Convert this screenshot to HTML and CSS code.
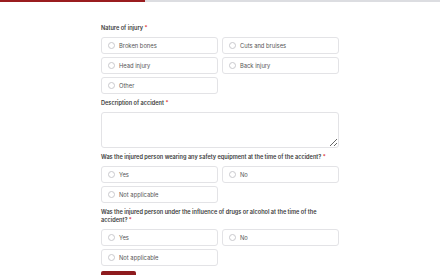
FILE: index.html
```html
<!DOCTYPE html>
<html>
  <head>
    <link rel="stylesheet" href="styles.css">
  </head>
  <body>
    <div class="progress"><div class="progress-fill"></div></div>
    <form class="form">
      <div class="field">
        <div class="label">Nature of injury <span class="req">*</span></div>
        <div class="options">
          <label class="option"><input type="radio" name="injury"><span>Broken bones</span></label>
          <label class="option"><input type="radio" name="injury"><span>Cuts and bruises</span></label>
          <label class="option"><input type="radio" name="injury"><span>Head injury</span></label>
          <label class="option"><input type="radio" name="injury"><span>Back injury</span></label>
          <label class="option"><input type="radio" name="injury"><span>Other</span></label>
        </div>
      </div>
      <div class="field">
        <div class="label">Description of accident <span class="req">*</span></div>
        <textarea class="textarea"></textarea>
      </div>
      <div class="field">
        <div class="label">Was the injured person wearing any safety equipment at the time of the accident? <span class="req">*</span></div>
        <div class="options">
          <label class="option"><input type="radio" name="safety"><span>Yes</span></label>
          <label class="option"><input type="radio" name="safety"><span>No</span></label>
          <label class="option"><input type="radio" name="safety"><span>Not applicable</span></label>
        </div>
      </div>
      <div class="field">
        <div class="label">Was the injured person under the influence of drugs or alcohol at the time of the accident? <span class="req">*</span></div>
        <div class="options">
          <label class="option"><input type="radio" name="drugs"><span>Yes</span></label>
          <label class="option"><input type="radio" name="drugs"><span>No</span></label>
          <label class="option"><input type="radio" name="drugs"><span>Not applicable</span></label>
        </div>
      </div>
      <button type="button" class="next">Next</button>
    </form>
  </body>
</html>
```

FILE: styles.css
```css
* {
  box-sizing: border-box;
  margin: 0;
  padding: 0;
}

body {
  background: #fff;
  font-family: Inter, 'Noto Sans', sans-serif;
  color: #333;
}

.progress {
  height: 2px;
  background: #dcdde1;
}

.progress-fill {
  width: 33%;
  height: 100%;
  background: #9a1c1f;
}

.form {
  width: 238px;
  margin: 0 auto;
  padding-top: 22px;
  display: flex;
  flex-direction: column;
  gap: 5px;
}

.label {
  font-size: 5.6px;
  line-height: 8px;
  font-weight: 600;
  color: #3a3a3a;
  margin-bottom: 5px;
}

.req {
  color: #d33;
}

.options {
  display: grid;
  grid-template-columns: 1fr 1fr;
  gap: 3px 4px;
}

.option {
  height: 17px;
  display: flex;
  align-items: center;
  gap: 4px;
  padding-left: 6px;
  border: 1px solid #e3e3e6;
  border-radius: 3px;
  font-size: 5.8px;
  color: #555;
}

.option input {
  appearance: none;
  width: 7px;
  height: 7px;
  border: 0.6px solid #c9c9cd;
  border-radius: 50%;
  background: #fff;
}

.textarea {
  display: block;
  width: 100%;
  height: 36px;
  border: 1px solid #e3e3e6;
  border-radius: 3px;
  resize: vertical;
  font-family: inherit;
}

.next {
  width: 35px;
  height: 14px;
  border: none;
  border-radius: 2px;
  background: #8e1b1e;
  color: #fff;
  font-family: inherit;
  font-size: 5.8px;
}
```
